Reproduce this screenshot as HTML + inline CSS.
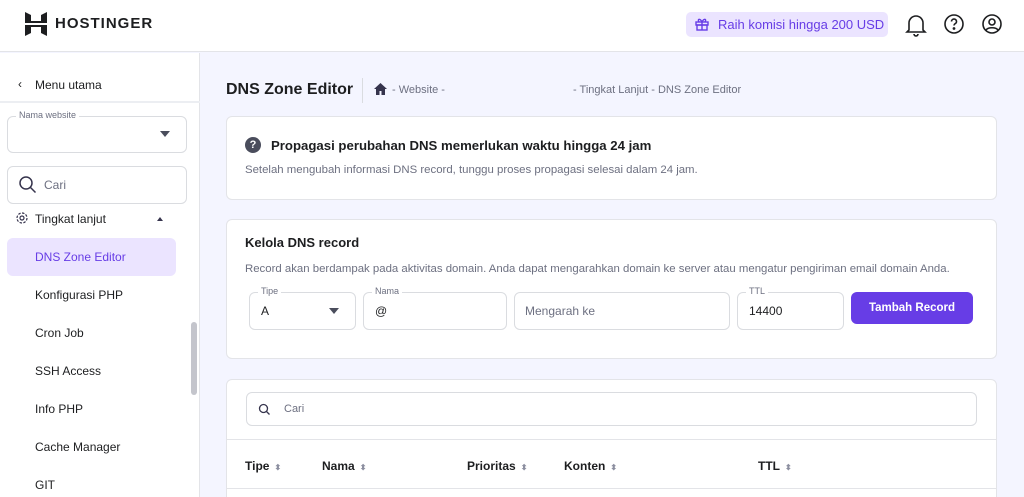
<!DOCTYPE html>
<html style="width:1024px;height:497px;overflow:hidden"><head><meta charset="utf-8"><style>
*{box-sizing:border-box;margin:0;padding:0}
body{width:1024px;height:497px;overflow:hidden;background:#f4f5ff;font-family:"Liberation Sans",sans-serif;color:#1d1e20;position:relative}
.a{position:absolute;white-space:nowrap}
.hdr{left:0;top:0;width:1024px;height:52px;background:#fff;border-bottom:1px solid #e3e4e8}
.side{left:0;top:53px;width:200px;height:444px;background:#fff;border-right:1px solid #e3e4e8}
.box{position:absolute;border:1px solid #dadce0;border-radius:6px;background:#fff}
.card{position:absolute;background:#fff;border:1px solid #e3e4e8;border-radius:6px}
.lbl{position:absolute;top:-7px;left:8px;background:#fff;padding:0 3px;font-size:9px;color:#6d7081}
.it{font-size:12px;color:#1d1e20;left:35px}
.th{font-size:12px;font-weight:bold;top:459px}
.th span{color:#8c8fa0;font-size:8px;margin-left:5px}
</style></head><body>
<div class="a hdr"></div>
<svg class="a" style="left:25px;top:12px" width="22" height="24" viewBox="0 0 22 24"><path d="M0 0l6 3v6l10 0V3l6-3v11H0z M0 13h22v11l-6-3v-6H6v6l-6 3z" fill="#1d1e20"/></svg>
<div class="a" style="left:55px;top:15px;font-size:15px;font-weight:bold;letter-spacing:1px">HOSTINGER</div>
<div class="a" style="left:686px;top:12px;width:202px;height:25px;background:#ebe4ff;border-radius:5px"></div>
<svg class="a" style="left:694px;top:16px" width="16" height="16" viewBox="0 0 16 16" fill="none" stroke="#673de6" stroke-width="1.4"><rect x="2" y="6" width="12" height="3"/><rect x="3" y="9" width="10" height="5"/><path d="M8 6v8M8 6C6 2 3 3 5 6M8 6c2-4 5-3 3 0"/></svg>
<div class="a" style="left:718px;top:17px;font-size:13px;color:#673de6">Raih komisi hingga 200 USD</div>
<svg class="a" style="left:905px;top:13px" width="22" height="24" viewBox="0 0 22 24" fill="none" stroke="#1d1e20" stroke-width="1.6"><path d="M4 17V10a7 7 0 0 1 14 0v7l2 2H2z M9 21a2 2 0 0 0 4 0"/></svg>
<svg class="a" style="left:943px;top:13px" width="22" height="22" viewBox="0 0 22 22" fill="none" stroke="#1d1e20" stroke-width="1.6"><circle cx="11" cy="11" r="9"/><path d="M8.5 8.5a2.5 2.5 0 1 1 3.5 2.3c-.7.4-1 .8-1 1.7"/><circle cx="11" cy="15.5" r=".6" fill="#1d1e20"/></svg>
<svg class="a" style="left:981px;top:13px" width="22" height="22" viewBox="0 0 22 22" fill="none" stroke="#1d1e20" stroke-width="1.6"><circle cx="11" cy="11" r="9"/><circle cx="11" cy="9" r="3"/><path d="M5 17c2-3 10-3 12 0"/></svg>

<div class="a side"></div>
<div class="a" style="left:18px;top:77px;font-size:12px">‹</div>
<div class="a" style="left:35px;top:78px;font-size:12px">Menu utama</div>
<div class="a" style="left:0;top:101px;width:200px;height:2px;background:#eceef2"></div>
<div class="box" style="left:7px;top:116px;width:180px;height:37px"><div class="lbl">Nama website</div></div>
<div class="a" style="left:160px;top:131px;width:0;height:0;border-left:5px solid transparent;border-right:5px solid transparent;border-top:6px solid #4a4d5c"></div>
<div class="box" style="left:7px;top:166px;width:180px;height:38px"></div>
<svg class="a" style="left:18px;top:175px" width="20" height="20" viewBox="0 0 20 20" fill="none" stroke="#36344d" stroke-width="1.5"><circle cx="8" cy="8" r="6"/><path d="M12.5 12.5l5 5"/></svg>
<div class="a" style="left:44px;top:178px;font-size:12px;color:#6d7081">Cari</div>
<svg class="a" style="left:15px;top:211px" width="14" height="14" viewBox="0 0 14 14" fill="none" stroke="#36344d" stroke-width="1.2"><circle cx="7" cy="7" r="2"/><circle cx="7" cy="7" r="5" stroke-dasharray="2.5 1.4"/></svg>
<div class="a it" style="top:212px">Tingkat lanjut</div>
<div class="a" style="left:157px;top:217px;width:0;height:0;border-left:3px solid transparent;border-right:3px solid transparent;border-bottom:4px solid #36344d"></div>
<div class="a" style="left:7px;top:238px;width:169px;height:38px;background:#ebe4ff;border-radius:6px"></div>
<div class="a it" style="top:250px;color:#673de6">DNS Zone Editor</div>
<div class="a it" style="top:288px">Konfigurasi PHP</div>
<div class="a it" style="top:326px">Cron Job</div>
<div class="a it" style="top:364px">SSH Access</div>
<div class="a it" style="top:402px">Info PHP</div>
<div class="a it" style="top:440px">Cache Manager</div>
<div class="a it" style="top:478px">GIT</div>
<div class="a" style="left:191px;top:322px;width:6px;height:73px;background:#c4c5cc;border-radius:3px"></div>

<div class="a" style="left:226px;top:81px;font-size:16px;font-weight:bold">DNS Zone Editor</div>
<div class="a" style="left:362px;top:78px;width:1px;height:25px;background:#dadce0"></div>
<svg class="a" style="left:374px;top:83px" width="13" height="12" viewBox="0 0 13 12"><path d="M6.5 0L0 6h2v6h3.5V8h2v4H11V6h2z" fill="#36344d"/></svg>
<div class="a" style="left:392px;top:84px;font-size:11px;color:#6d7081">- Website -</div>
<div class="a" style="left:573px;top:84px;font-size:11px;color:#6d7081">- Tingkat Lanjut - DNS Zone Editor</div>

<div class="card" style="left:226px;top:116px;width:771px;height:84px"></div>
<div class="a" style="left:245px;top:137px;width:16px;height:16px;border-radius:50%;background:#4a4d5c;color:#fff;font-size:11px;font-weight:bold;text-align:center;line-height:16px">?</div>
<div class="a" style="left:271px;top:138px;font-size:13.2px;font-weight:bold">Propagasi perubahan DNS memerlukan waktu hingga 24 jam</div>
<div class="a" style="left:245px;top:164px;font-size:11.4px;color:#6d7081">Setelah mengubah informasi DNS record, tunggu proses propagasi selesai dalam 24 jam.</div>

<div class="card" style="left:226px;top:219px;width:771px;height:140px"></div>
<div class="a" style="left:245px;top:235px;font-size:13px;font-weight:bold">Kelola DNS record</div>
<div class="a" style="left:245px;top:263px;font-size:11.4px;color:#6d7081">Record akan berdampak pada aktivitas domain. Anda dapat mengarahkan domain ke server atau mengatur pengiriman email domain Anda.</div>
<div class="box" style="left:249px;top:292px;width:107px;height:38px"><div class="lbl">Tipe</div></div>
<div class="a" style="left:261px;top:304px;font-size:12px">A</div>
<div class="a" style="left:329px;top:308px;width:0;height:0;border-left:5px solid transparent;border-right:5px solid transparent;border-top:6px solid #4a4d5c"></div>
<div class="box" style="left:363px;top:292px;width:144px;height:38px"><div class="lbl">Nama</div></div>
<div class="a" style="left:375px;top:304px;font-size:12px">@</div>
<div class="box" style="left:514px;top:292px;width:216px;height:38px"></div>
<div class="a" style="left:525px;top:304px;font-size:12px;color:#6d7081">Mengarah ke</div>
<div class="box" style="left:737px;top:292px;width:107px;height:38px"><div class="lbl">TTL</div></div>
<div class="a" style="left:749px;top:304px;font-size:12px">14400</div>
<div class="a" style="left:851px;top:292px;width:122px;height:32px;background:#673de6;border-radius:6px;color:#fff;font-size:11.5px;font-weight:bold;text-align:center;line-height:32px">Tambah Record</div>

<div class="card" style="left:226px;top:379px;width:771px;height:125px"></div>
<div class="box" style="left:246px;top:392px;width:731px;height:34px"></div>
<svg class="a" style="left:258px;top:403px" width="13" height="13" viewBox="0 0 13 13" fill="none" stroke="#36344d" stroke-width="1.3"><circle cx="5.5" cy="5.5" r="4"/><path d="M8.5 8.5l3 3"/></svg>
<div class="a" style="left:284px;top:403px;font-size:11px;color:#6d7081">Cari</div>
<div class="a" style="left:227px;top:439px;width:769px;height:1px;background:#e3e4e8"></div>
<div class="a th" style="left:245px">Tipe<span>⬍</span></div>
<div class="a th" style="left:322px">Nama<span>⬍</span></div>
<div class="a th" style="left:467px">Prioritas<span>⬍</span></div>
<div class="a th" style="left:564px">Konten<span>⬍</span></div>
<div class="a th" style="left:758px">TTL<span>⬍</span></div>
<div class="a" style="left:227px;top:488px;width:769px;height:1px;background:#e3e4e8"></div>
</body></html>
